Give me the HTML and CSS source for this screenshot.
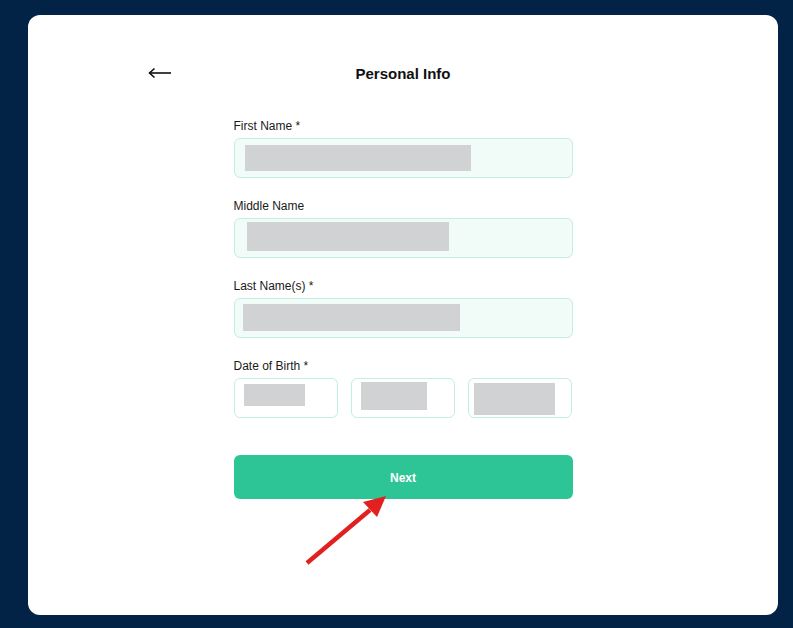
FILE: index.html
```html
<!DOCTYPE html>
<html>
<head>
<meta charset="utf-8">
<link rel="stylesheet" href="styles.css">
</head>
<body>
<div class="card">
  <div class="header">
    <svg class="back" width="24" height="12" viewBox="0 0 24 12">
      <path d="M1.5 6 H23" stroke="#111" stroke-width="1.6" fill="none"/>
      <path d="M6.5 1.5 L1.5 6 L6.5 10.5" stroke="#111" stroke-width="1.6" fill="none" stroke-linejoin="miter"/>
    </svg>
    <div class="title">Personal Info</div>
  </div>
  <form class="form">
    <div class="field">
      <div class="label">First Name *</div>
      <div class="input tinted"><span class="redact r1"></span></div>
    </div>
    <div class="field">
      <div class="label">Middle Name</div>
      <div class="input tinted"><span class="redact r2"></span></div>
    </div>
    <div class="field">
      <div class="label">Last Name(s) *</div>
      <div class="input tinted"><span class="redact r3"></span></div>
    </div>
    <div class="field">
      <div class="label">Date of Birth *</div>
      <div class="dob">
        <div class="input small"><span class="redact d1"></span></div>
        <div class="input small"><span class="redact d2"></span></div>
        <div class="input small"><span class="redact d3"></span></div>
      </div>
    </div>
    <div class="button">Next</div>
  </form>
  <svg class="pointer" width="100" height="80" viewBox="0 0 100 80">
    <line x1="7" y1="68" x2="70" y2="15" stroke="#e32020" stroke-width="4.5" stroke-linecap="butt"/>
    <polygon points="86,1 63,7 77,22" fill="#e32020"/>
  </svg>
</div>
</body>
</html>
```
FILE: styles.css
```css
html, body {
  margin: 0;
  padding: 0;
}
body {
  background: #022246;
  width: 793px;
  height: 628px;
  overflow: hidden;
  font-family: "Liberation Sans", Arial, sans-serif;
  color: #1a1a1a;
}
.card {
  position: relative;
  box-sizing: border-box;
  margin: 15px 15px 0 28px;
  width: 750px;
  height: 600px;
  background: #fff;
  border-radius: 12px;
  padding-top: 48px;
}
.header {
  position: relative;
  width: 510px;
  height: 20px;
  margin: 0 auto;
  display: flex;
  align-items: center;
  justify-content: center;
}
.back {
  position: absolute;
  left: 0;
  top: 4px;
}
.title {
  font-size: 15px;
  font-weight: bold;
  color: #111;
}
.form {
  width: 339px;
  margin: 35px auto 0;
  display: flex;
  flex-direction: column;
}
.field {
  margin-bottom: 20px;
}
.label {
  font-size: 12px;
  line-height: 16px;
  height: 15px;
  margin-bottom: 5px;
  color: #1a1a1a;
}
.input {
  box-sizing: border-box;
  height: 40px;
  border: 1px solid #c2efdf;
  border-radius: 6px;
  background: #fff;
  display: flex;
  align-items: flex-start;
}
.input.tinted {
  background: #f1fbf8;
}
.redact {
  display: block;
  background: #d1d2d4;
}
.r1 { width: 226px; height: 26px; margin: 6px 0 0 10px; }
.r2 { width: 202px; height: 29px; margin: 3px 0 0 12px; }
.r3 { width: 217px; height: 27px; margin: 5px 0 0 8px; }
.dob {
  display: flex;
  gap: 13px;
}
.input.small {
  flex: 1;
}
.d1 { width: 61px; height: 22px; margin: 5px 0 0 9px; }
.d2 { width: 66px; height: 28px; margin: 3px 0 0 9px; }
.d3 { width: 81px; height: 32px; margin: 4px 0 0 5px; }
.button {
  box-sizing: border-box;
  margin-top: 17px;
  height: 44px;
  padding-top: 2px;
  border-radius: 6px;
  background: #2dc596;
  color: #fff;
  font-size: 12px;
  font-weight: bold;
  display: flex;
  align-items: center;
  justify-content: center;
}
.pointer {
  position: absolute;
  left: 272px;
  top: 480px;
}
```
